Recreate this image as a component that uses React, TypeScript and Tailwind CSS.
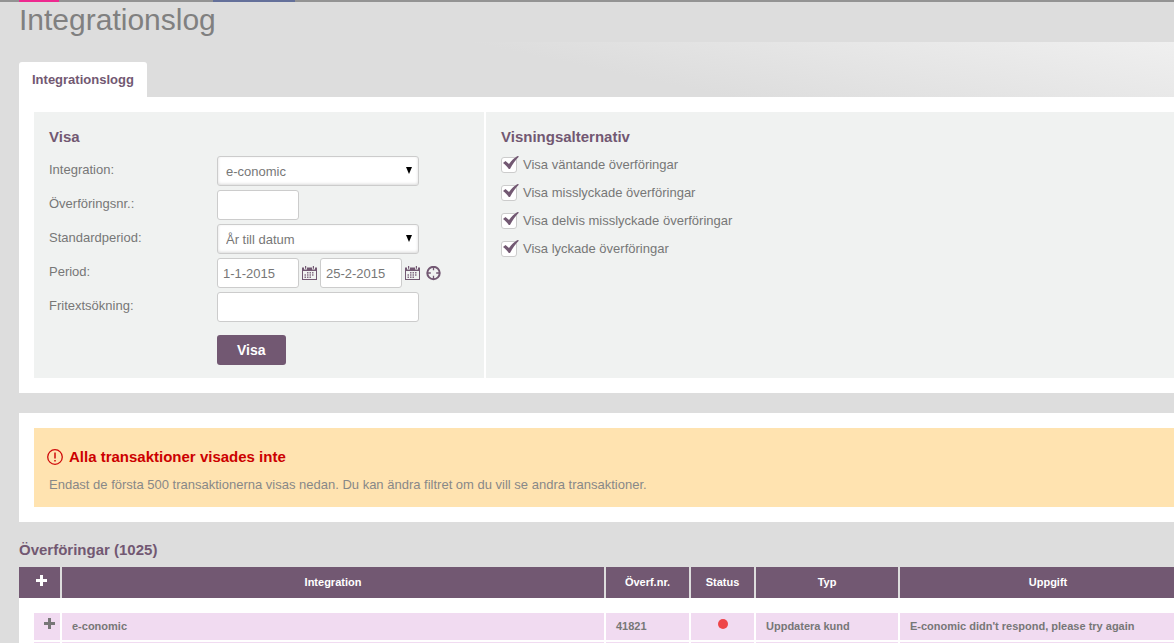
import { useState } from "react";

type Transfer = {
  id: string;
  integration: string;
  number: string;
  type: string;
  message: string;
};

const transfers: Transfer[] = [
  {
    id: "1",
    integration: "e-conomic",
    number: "41821",
    type: "Uppdatera kund",
    message: "E-conomic didn't respond, please try again",
  },
  { id: "2", integration: "", number: "", type: "", message: "" },
];

const displayOptions = [
  { id: "pending", label: "Visa väntande överföringar" },
  { id: "failed", label: "Visa misslyckade överföringar" },
  { id: "partial", label: "Visa delvis misslyckade överföringar" },
  { id: "succeeded", label: "Visa lyckade överföringar" },
];

const inputClass =
  "h-[30px] rounded-[3px] border border-[#ccc] bg-white px-[5px] text-[13px] text-[#777] focus:border-[#725872] focus:outline-none";

function CalendarIcon() {
  return (
    <svg width="15" height="15" viewBox="0 0 15 15" fill="#725872">
      <path d="M0 1.500h2v2h3v-2h5v2h3v-2h2V14H0z M1 5v8h13V5z" fillRule="evenodd" />
      <path d="M3 0h1.200v2.800H3z M10.800 0H12v2.800h-1.200z" />
      <path
        d="M5 6h1.500v1.500H5z M7.500 6H9v1.500H7.500z M10 6h1.500v1.500H10z M2.500 8.200H4v1.500H2.500z M5 8.200h1.500v1.500H5z M7.500 8.200H9v1.500H7.500z M10 8.200h1.500v1.500H10z M2.500 10.400H4v1.500H2.500z M5 10.400h1.500v1.500H5z M7.500 10.400H9v1.500H7.500z"
        opacity="0.85"
      />
    </svg>
  );
}

function TargetIcon() {
  return (
    <svg width="15" height="15" viewBox="0 0 15 15" fill="none" stroke="#725872">
      <circle cx="7.5" cy="7" r="6.2" strokeWidth="2" />
      <path d="M7.500 1v3.300M7.500 9.700V13M1.500 7h3.300M10.200 7h3.300" strokeWidth="1.300" />
    </svg>
  );
}

function PlusIcon({ className }: { className: string }) {
  return (
    <svg className={className} width="11" height="11" viewBox="0 0 11 11" fill="currentColor">
      <path d="M4 0h3v4h4v3H7v4H4V7H0V4h4z" />
    </svg>
  );
}

function Select({ id, value }: { id: string; value: string }) {
  return (
    <div className="relative w-[202px]">
      <select
        id={id}
        defaultValue={value}
        className="block h-[30px] w-full appearance-none rounded-[3px] border border-[#ccc] bg-white px-2 pt-[2px] text-[13px] text-[#777] shadow-[inset_0_-1px_3px_rgba(0,0,0,0.15)] focus:outline-none"
      >
        <option>{value}</option>
      </select>
      <svg
        className="pointer-events-none absolute top-[11px] right-[7px]"
        width="6"
        height="7"
        viewBox="0 0 6 7"
      >
        <path d="M0 0h6L3 7z" fill="#000" />
      </svg>
    </div>
  );
}

function DisplayOption({ id, label }: { id: string; label: string }) {
  const [checked, setChecked] = useState(true);

  return (
    <div className="flex h-7 items-center">
      <span className="relative mr-[6px] flex">
        <input
          id={id}
          type="checkbox"
          checked={checked}
          onChange={(e) => setChecked(e.target.checked)}
          className="size-4 appearance-none rounded-[3px] border border-[#ccc] bg-white"
        />
        {checked && (
          <svg
            className="pointer-events-none absolute -top-px left-[2px]"
            width="16"
            height="14"
            viewBox="0 0 16 14"
            fill="#725872"
          >
            <path d="M0 7L2.500 5L6 8C8.500 4.500 11.500 1.500 14.500 0L16 .5C12.500 4 9.500 8 7 13H5.800C4.200 10.500 2.200 8.500 0 7Z" />
          </svg>
        )}
      </span>
      <label htmlFor={id}>{label}</label>
    </div>
  );
}

export default function App() {
  const rowClass = "grid grid-cols-[168px_1fr] items-center";
  const headClass = "border-r-2 border-[#ddd] bg-[#725872] p-0 pb-px text-center font-bold";
  const cellClass = "border-r-2 border-b-2 border-white bg-[#f1dbf1] px-[10px] pb-[2px] font-bold";

  return (
    <div className="h-screen overflow-hidden bg-[#ddd] font-['Liberation_Sans',Arial,sans-serif] text-[13px] leading-4 text-[#777]">
      <div className="flex h-[2px] bg-[#939393]">
        <div className="ml-[19px] w-10 bg-[#ee2a90]" />
        <div className="ml-[154px] w-[82px] bg-[#64709a]" />
      </div>

      {/* the content runs a little past the right edge of the window */}
      <div className="-mr-6">
        <h1 className="h-10 pl-[19px] text-[30px] leading-9 text-[#808080]">Integrationslog</h1>

        <div className="flex h-[55px] items-end bg-[linear-gradient(12deg,#ddd_50%,#f0f0f0)] pl-[19px]">
          <a
            href="#log"
            className="flex h-[35px] items-center rounded-t-[3px] bg-white px-[13px] font-bold text-[#725872]"
          >
            Integrationslogg
          </a>
        </div>

        <main className="pl-[19px]">
          <section id="log" className="flex gap-[2px] bg-white p-[15px]">
            <form
              className="w-[450px] bg-[#f0f2f1] px-[15px] pt-[17px] pb-[13px]"
              onSubmit={(e) => e.preventDefault()}
            >
              <h2 className="mb-[11px] text-[15px] font-bold text-[#725872]">Visa</h2>
              <div className="flex flex-col gap-1">
                <div className={rowClass}>
                  <label htmlFor="integration" className="pb-[2px]">Integration:</label>
                  <Select id="integration" value="e-conomic" />
                </div>
                <div className={rowClass}>
                  <label htmlFor="number" className="pb-[2px]">Överföringsnr.:</label>
                  <input id="number" type="text" className={`${inputClass} w-[82px]`} />
                </div>
                <div className={rowClass}>
                  <label htmlFor="standard" className="pb-[2px]">Standardperiod:</label>
                  <Select id="standard" value="År till datum" />
                </div>
                <div className={rowClass}>
                  <label htmlFor="from" className="pb-[2px]">Period:</label>
                  <div className="flex items-center gap-[3px]">
                    <input
                      id="from"
                      type="text"
                      defaultValue="1-1-2015"
                      className={`${inputClass} w-[82px]`}
                    />
                    <button type="button" aria-label="Välj startdatum">
                      <CalendarIcon />
                    </button>
                    <input
                      type="text"
                      aria-label="Slutdatum"
                      defaultValue="25-2-2015"
                      className={`${inputClass} w-[82px]`}
                    />
                    <button type="button" aria-label="Välj slutdatum">
                      <CalendarIcon />
                    </button>
                    <button type="button" aria-label="Idag" className="ml-[3px]">
                      <TargetIcon />
                    </button>
                  </div>
                </div>
                <div className={rowClass}>
                  <label htmlFor="search" className="pb-[2px]">Fritextsökning:</label>
                  <input id="search" type="text" className={`${inputClass} w-[202px]`} />
                </div>
              </div>
              <button
                type="submit"
                className="mt-[13px] ml-[168px] block h-[30px] rounded-[3px] bg-[#725872] px-5 text-[14px] font-bold text-white"
              >
                Visa
              </button>
            </form>

            <div className="flex-1 bg-[#f0f2f1] px-[15px] pt-[17px]">
              <h2 className="mb-[6px] text-[15px] font-bold text-[#725872]">Visningsalternativ</h2>
              {displayOptions.map((o) => (
                <DisplayOption key={o.id} id={o.id} label={o.label} />
              ))}
            </div>
          </section>

          <section className="mt-5 bg-white p-[15px]">
            <div className="bg-[#ffe3b0] px-[13px] pt-5 pb-[14px]">
              <h2 className="flex items-center gap-[6px] text-[15px] leading-[18px] font-bold text-[#c00]">
                <svg width="16" height="16" viewBox="0 0 16 16" fill="none" stroke="#d00b0b">
                  <circle cx="8" cy="8" r="7.300" strokeWidth="1.300" />
                  <path d="M8 3.500v6M8 11v1.500" strokeWidth="1.500" />
                </svg>
                Alla transaktioner visades inte
              </h2>
              <p className="mt-[11px] pl-[2px] text-[#888]">
                Endast de första 500 transaktionerna visas nedan. Du kan ändra filtret om du vill
                se andra transaktioner.
              </p>
            </div>
          </section>

          <h2 className="mt-5 mb-[9px] text-[15px] font-bold text-[#725872]">
            Överföringar (1025)
          </h2>
          <table className="w-full table-fixed border-separate border-spacing-0 bg-white text-[11px]">
            <colgroup>
              <col className="w-[43px]" />
              <col />
              <col className="w-[85px]" />
              <col className="w-[65px]" />
              <col className="w-[144px]" />
              <col className="w-[298px]" />
            </colgroup>
            <thead className="text-white">
              <tr className="h-[31px]">
                <th className={headClass}>
                  <button type="button" aria-label="Visa alla" className="block w-full pl-1">
                    <PlusIcon className="mx-auto mb-1" />
                  </button>
                </th>
                <th className={headClass}>Integration</th>
                <th className={headClass}>Överf.nr.</th>
                <th className={headClass}>Status</th>
                <th className={headClass}>Typ</th>
                <th className={headClass}>Uppgift</th>
              </tr>
            </thead>
            <tbody>
              <tr className="h-[15px]">
                <td colSpan={6} />
              </tr>
              {transfers.map((t) => (
                <tr key={t.id} className="h-[29px]">
                  <td className="border-r-2 border-b-2 border-l-[15px] border-white bg-[#f1dbf1] p-0 pb-[2px]">
                    {t.number && (
                      <button type="button" aria-label="Visa mer" className="block w-full pl-1">
                        <PlusIcon className="mx-auto mb-1" />
                      </button>
                    )}
                  </td>
                  <td className={cellClass}>{t.integration}</td>
                  <td className={cellClass}>{t.number}</td>
                  <td className={cellClass}>
                    {t.number && (
                      <div className="mx-auto mb-1 size-[10px] rounded-full bg-[#ee4549]" />
                    )}
                  </td>
                  <td className={cellClass}>{t.type}</td>
                  <td className={cellClass}>{t.message}</td>
                </tr>
              ))}
            </tbody>
          </table>
        </main>
      </div>
    </div>
  );
}
